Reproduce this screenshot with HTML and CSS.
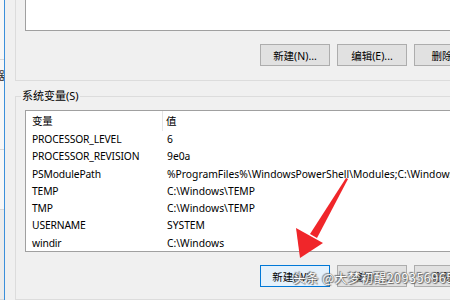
FILE: index.html
```html
<!DOCTYPE html>
<html lang="zh-CN">
<head>
    <meta charset="UTF-8">
    <title>环境变量</title>
    <link rel="stylesheet" href="styles.css">
</head>
<body>
    <div class="side">
        <div class="side-cell"></div>
        <div class="side-cell glyph">器</div>
        <div class="side-cell"></div>
        <div class="side-cell tall"></div>
        <div class="side-red"></div>
    </div>

    <div class="dialog">
        <!-- 用户变量 -->
        <div class="group user-group">
            <div class="listbox top-list"></div>
            <div class="btn-row">
                <button class="btn">新建(N)...</button>
                <button class="btn">编辑(E)...</button>
                <button class="btn">删除(D)</button>
            </div>
        </div>

        <!-- 系统变量 -->
        <fieldset class="group sys-group">
            <legend>系统变量(S)</legend>
            <div class="listbox var-list">
                <div class="row head">
                    <span class="col-name">变量</span>
                    <span class="col-value">值</span>
                </div>
                <div class="row"><span class="col-name">PROCESSOR_LEVEL</span><span class="col-value">6</span></div>
                <div class="row"><span class="col-name">PROCESSOR_REVISION</span><span class="col-value">9e0a</span></div>
                <div class="row"><span class="col-name">PSModulePath</span><span class="col-value">%ProgramFiles%\WindowsPowerShell\Modules;C:\Windows\system32</span></div>
                <div class="row"><span class="col-name">TEMP</span><span class="col-value">C:\Windows\TEMP</span></div>
                <div class="row"><span class="col-name">TMP</span><span class="col-value">C:\Windows\TEMP</span></div>
                <div class="row"><span class="col-name">USERNAME</span><span class="col-value">SYSTEM</span></div>
                <div class="row"><span class="col-name">windir</span><span class="col-value">C:\Windows</span></div>
            </div>
            <div class="btn-row">
                <button class="btn focused">新建(W)...</button>
                <button class="btn">编辑(I)...</button>
                <button class="btn">删除(L)</button>
            </div>
        </fieldset>
    </div>

    <!-- annotation arrow -->
    <svg class="arrow" width="450" height="300" viewBox="0 0 450 300">
        <polygon points="348,179 317,238 310,234 346,178" fill="#f0262a"/>
        <polygon points="296,228 323,243 300,258" fill="#f0262a"/>
    </svg>

    <div class="watermark">头条 @大梦初醒209356965</div>
</body>
</html>
```

FILE: styles.css
```css
* {
    margin: 0;
    padding: 0;
    box-sizing: border-box;
}

body {
    width: 450px;
    height: 300px;
    overflow: hidden;
    display: flex;
    background-color: #f0f0f0;
    font-family: 'Noto Sans', 'Noto Sans CJK SC', sans-serif;
    font-size: 10px;
    color: #000;
    position: relative;
}

/* window peeking in from the left */
.side {
    width: 5px;
    flex-shrink: 0;
    background-color: #f7f7f7;
    border-right: 1px solid #3b8fda;
    display: flex;
    flex-direction: column;
    overflow: hidden;
}

.side-cell {
    height: 66px;
    border-bottom: 1px solid #d8d8d8;
}

.side-cell.glyph {
    height: 100px;
    font-family: 'Noto Sans CJK SC', sans-serif;
    font-size: 11px;
    line-height: 22px;
    padding-top: 4px;
    text-indent: -6px;
    color: #333;
}

.side-cell.tall {
    height: 100px;
    background-color: #ececec;
}

.side-red {
    flex: 1;
    background-color: #e0402a;
}

.dialog {
    flex: 1;
    padding-left: 10px;
    display: flex;
    flex-direction: column;
    overflow: hidden;
}

.group {
    border: 1px solid #dcdcdc;
    border-right: none;
    padding-left: 9px;
}

.user-group {
    border-top: none;
    height: 81px;
}

.listbox {
    background-color: #fff;
    border: 1px solid #a0a0a0;
    border-right: none;
}

.top-list {
    height: 31px;
    border-top: none;
}

.btn-row {
    display: flex;
    gap: 7px;
    padding-left: 235px;
    margin-top: 13px;
}

.btn {
    flex-shrink: 0;
    width: 70px;
    height: 22px;
    background-color: #e1e1e1;
    border: 1px solid #adadad;
    font-family: 'Noto Sans', 'Noto Sans CJK SC', sans-serif;
    font-size: 10.5px;
    color: #000;
    text-align: center;
    white-space: nowrap;
}

.btn.focused {
    background-color: #e5f1fb;
    border-color: #0078d7;
}

.sys-group {
    margin-top: 8px;
    padding-top: 7px;
    flex: 1;
    min-width: 0;
}

.sys-group legend {
    margin-left: -4px;
    padding: 0 1px;
    line-height: 14px;
    font-size: 11px;
}

.var-list {
    height: 142px;
    overflow: hidden;
    font-size: 10.3px;
}

.row {
    display: flex;
    height: 17.3px;
    line-height: 17.3px;
    white-space: nowrap;
}

.row.head {
    height: 20px;
    line-height: 20px;
    font-size: 10.5px;
}

.col-name {
    width: 137px;
    flex-shrink: 0;
    padding-left: 6px;
    letter-spacing: -0.15px;
}

.row.head .col-name {
    border-right: 1px solid #e5e5e5;
}

.col-value {
    padding-left: 4px;
}

.row.head .col-value {
    padding-left: 3px;
}

.arrow {
    position: absolute;
    left: 0;
    top: 0;
    pointer-events: none;
}

.watermark {
    position: absolute;
    left: 293px;
    top: 270px;
    font-family: 'Noto Sans CJK SC', sans-serif;
    font-size: 12.5px;
    line-height: 16px;
    letter-spacing: 0.5px;
    color: #fff;
    white-space: nowrap;
    text-shadow: 0 0 1px #555, 1px 1px 1px #666, -1px -1px 1px #777;
}
```
